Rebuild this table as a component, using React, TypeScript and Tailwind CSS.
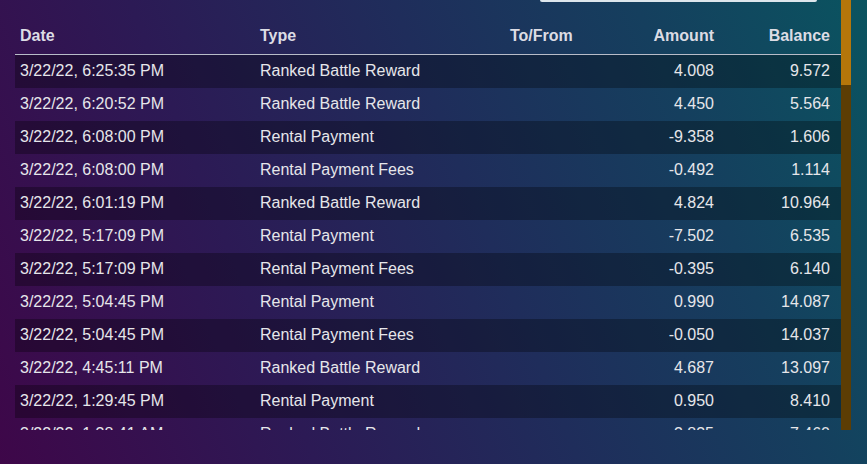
import React from "react";

const rows: [string, string, string, string][] = [
  ["3/22/22, 6:25:35 PM", "Ranked Battle Reward", "4.008", "9.572"],
  ["3/22/22, 6:20:52 PM", "Ranked Battle Reward", "4.450", "5.564"],
  ["3/22/22, 6:08:00 PM", "Rental Payment", "-9.358", "1.606"],
  ["3/22/22, 6:08:00 PM", "Rental Payment Fees", "-0.492", "1.114"],
  ["3/22/22, 6:01:19 PM", "Ranked Battle Reward", "4.824", "10.964"],
  ["3/22/22, 5:17:09 PM", "Rental Payment", "-7.502", "6.535"],
  ["3/22/22, 5:17:09 PM", "Rental Payment Fees", "-0.395", "6.140"],
  ["3/22/22, 5:04:45 PM", "Rental Payment", "0.990", "14.087"],
  ["3/22/22, 5:04:45 PM", "Rental Payment Fees", "-0.050", "14.037"],
  ["3/22/22, 4:45:11 PM", "Ranked Battle Reward", "4.687", "13.097"],
  ["3/22/22, 1:29:45 PM", "Rental Payment", "0.950", "8.410"],
  ["3/22/22, 1:38:41 AM", "Ranked Battle Reward", "3.835", "7.460"],
];

const grid = "grid grid-cols-[240px_250px_100px_120px_116px]";

export default function App() {
  return (
    <div
      className="w-[867px] h-[464px] overflow-hidden bg-[linear-gradient(68deg,#3e0749_0%,#2c1a55_30%,#1f2d5b_55%,#153f5e_78%,#0a5460_100%)] text-[16px] text-[#e6e6ea]"
      style={{ fontFamily: '"Liberation Sans", Arial, sans-serif' }}
    >
      <div className="flex h-[430px]">
        <div className="ml-[15px] w-[826px] h-[430px] flex flex-col overflow-hidden">
          <div className="shrink-0 ml-[525px] w-[277px] h-[2px] bg-[#dde6ec] rounded-b-[2px]" />
          <div className={`${grid} shrink-0 mt-[18px] h-[35px] pb-[2px] items-center font-bold text-[#dcdce4] border-b border-[#b8bcc8]`}>
            <div className="pl-[5px]">Date</div>
            <div className="pl-[5px]">Type</div>
            <div className="pl-[5px]">To/From</div>
            <div className="pr-[11px] text-right">Amount</div>
            <div className="pr-[11px] text-right">Balance</div>
          </div>
          {rows.map((r, i) => (
            <div
              key={i}
              className={`${grid} h-[33px] pb-[2px] shrink-0 items-center ${i % 2 === 0 ? "bg-black/30" : ""}`}
            >
              <div className="pl-[5px] whitespace-nowrap">{r[0]}</div>
              <div className="pl-[5px] whitespace-nowrap">{r[1]}</div>
              <div className="pl-[5px]"></div>
              <div className="pr-[11px] text-right">{r[2]}</div>
              <div className="pr-[11px] text-right">{r[3]}</div>
            </div>
          ))}
        </div>
        <div className="w-[10px] h-[430px] bg-[#5c3d04] flex flex-col">
          <div className="h-[85px] bg-[#b5760a]" />
        </div>
      </div>
    </div>
  );
}
